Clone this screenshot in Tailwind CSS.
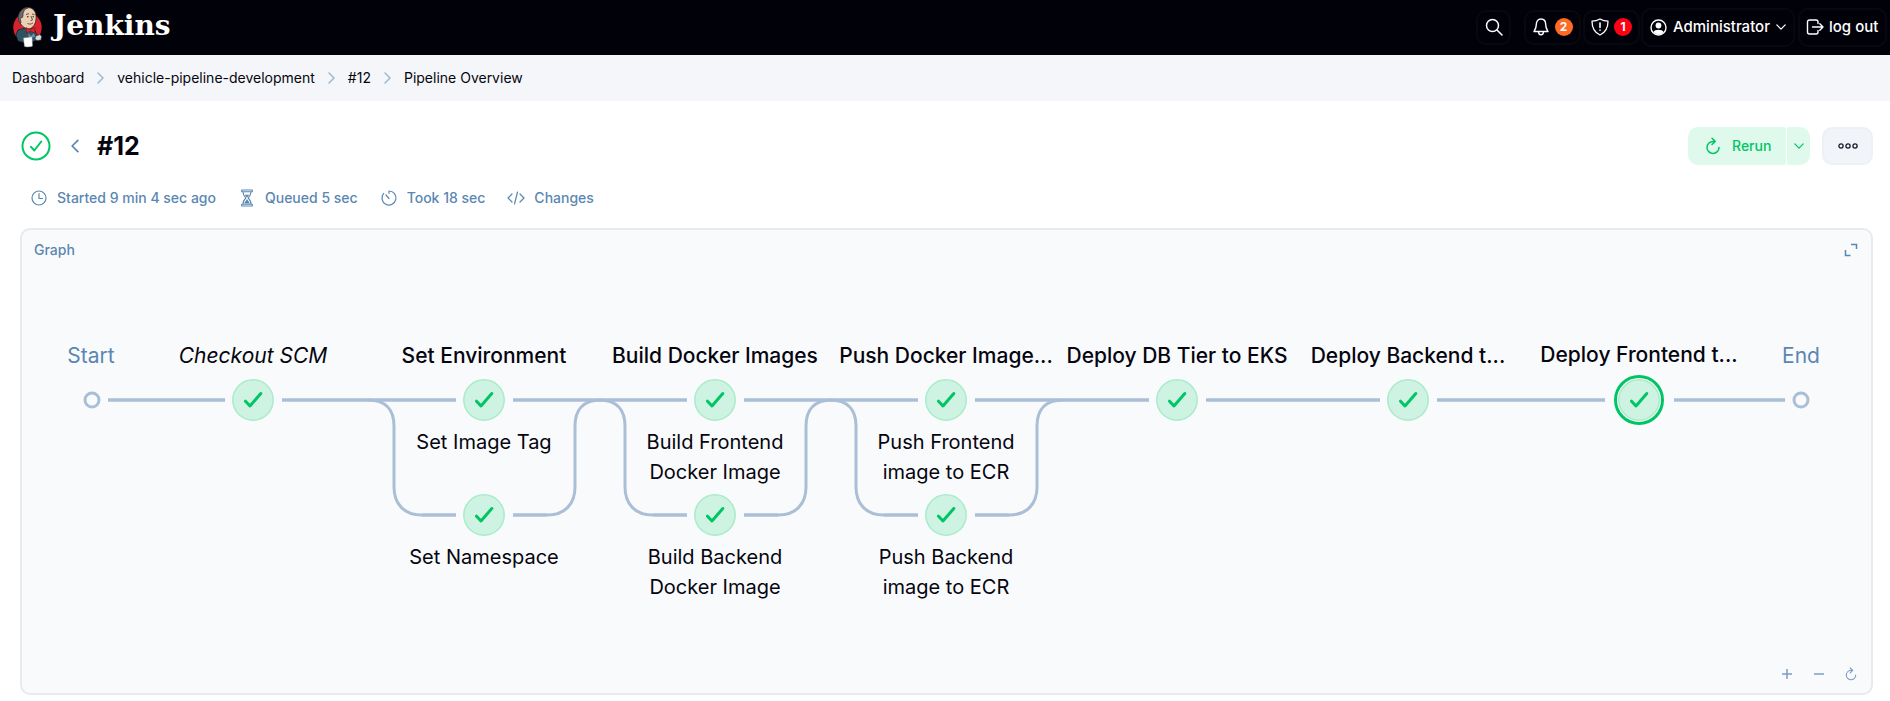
<!DOCTYPE html>
<html lang="en">
<head>
<meta charset="utf-8">
<meta name="viewport" content="width=device-width, initial-scale=1">
<title>vehicle-pipeline-development #12 - Pipeline Overview</title>
<script src="https://cdn.jsdelivr.net/npm/@tailwindcss/browser@4"></script>
</head>
<body class="flex min-h-screen flex-col bg-white font-['Inter',sans-serif] text-[14px] leading-5 text-[#05050f]">

<svg class="hidden" aria-hidden="true">
  <symbol id="node" viewBox="-22 -22 44 44">
    <circle r="20.2" fill="#cff3e2" stroke="#a9ecca" stroke-width="1.5"/>
    <path d="M-7.5 1.2-3 6 7.8-6.5" fill="none" stroke="#00c565" stroke-width="3" stroke-linecap="round" stroke-linejoin="round"/>
  </symbol>
  <symbol id="chevron" viewBox="0 0 7 12">
    <path d="M1 1l5 5-5 5" fill="none" stroke="currentColor" stroke-width="1.5" stroke-linecap="round" stroke-linejoin="round"/>
  </symbol>
  <symbol id="reload" viewBox="0 0 16 18">
    <path d="M9.5 4.4H8a6 6 0 1 0 6 6M7 1.3l3.2 3.1L7 7.5" fill="none" stroke="currentColor" stroke-width="1.5" stroke-linecap="round" stroke-linejoin="round"/>
  </symbol>
</svg>

<header class="flex h-[55px] shrink-0 items-center justify-between bg-[#01010a] pr-[3px] pb-[1px] pl-[12px] text-white">
  <a href="#" class="flex items-center gap-[10px]">
    <svg class="h-[42px] w-[31px]" viewBox="0 0 31 42" aria-hidden="true">
      <ellipse cx="15.500" cy="21.500" rx="14.200" ry="15" fill="#d8232f"/>
      <path d="M6 24l7-2 9 1 3 6 2 1-1 4-7 2-6 1-7-2-2-6z" fill="#2f5361" stroke="#0c1a20" stroke-width=".7"/>
      <path d="M8 17C5 12 7 4 13 2c7-2 12 3 11 11-.3 5-3 9-7 10-4 0-7-3-9-6z" fill="#eccfb2" stroke="#33201c" stroke-width=".8"/>
      <path d="M8 17c-3-4-2-11 3-14 2-1.300 4-1.400 5-1-4 1-5 4-5 8l-1 2-1-1c-1 2 0 4 0 6z" fill="#67696d" stroke="#292a2d" stroke-width=".6"/>
      <path d="M14 8.500l3-.8M20 8l2.500.7M19 10l1.500 4-2 .7M15.500 17.500c2 1 4 .6 5.500-.6" fill="none" stroke="#4b302a" stroke-width=".8"/>
      <circle cx="15.800" cy="10.800" r=".8" fill="#27222a"/><circle cx="21.200" cy="10.800" r=".7" fill="#27222a"/>
      <path d="M14 21.500l4 2 5-2-.3 5.500-4.700-2-3.500 2.400z" fill="#e0222c" stroke="#5b1517" stroke-width=".5"/>
      <path d="M16 27l3 3 3-3 1 4-6 1z" fill="#6f8fa0"/>
      <path d="M11.500 32l8.500-1 .5 9c-2 1-6 1.200-8 .5z" fill="#fff" stroke="#9da3a6" stroke-width=".4"/>
      <path d="M24 30l4-1.500 1.500 2-.5 3.500-4 .5-2-2z" fill="#d8dadd" stroke="#3b3b3e" stroke-width=".6"/>
    </svg>
    <span class="pb-[2px] font-['DejaVu_Serif',serif] text-[28px] leading-8 font-bold">Jenkins</span>
  </a>
  <nav class="flex items-center text-[15px] leading-6 font-medium" aria-label="User">
    <button class="mr-[13px] flex size-[35px] items-center justify-center rounded-[10px] border-2 border-white/3" aria-label="Search">
      <svg class="size-[18px]" viewBox="0 0 18 18" fill="none" stroke="currentColor" stroke-width="1.500" stroke-linecap="round"><circle cx="7.500" cy="7.500" r="6"/><path d="M12 12l5 5"/></svg>
    </button>
    <button class="mr-[2px] flex h-[35px] w-[57px] items-center justify-center gap-[6px] rounded-[10px] border-2 border-white/3" aria-label="Notifications, 2">
      <svg class="h-[18px] w-[16px]" viewBox="0 0 16 18" fill="none" stroke="currentColor" stroke-width="1.400" stroke-linejoin="round"><path d="M8 1C4.800 1 3.300 3.500 3.300 6.500 3.300 10 2 11.500 1 13.500h14c-1-2-2.300-3.500-2.300-7C12.700 3.500 11.200 1 8 1zM5.500 13.800c0 4 5 4 5 0"/></svg>
      <span class="flex size-[18px] items-center justify-center rounded-full bg-[#ff6a25] text-[12px] leading-4 font-bold">2</span>
    </button>
    <button class="mr-[1px] flex h-[35px] w-[57px] items-center justify-center gap-[5px] rounded-[10px] border-2 border-white/3" aria-label="Security warnings, 1">
      <svg class="size-[18px]" viewBox="0 0 18 18" fill="none" stroke="currentColor" stroke-width="1.300" stroke-linecap="round" stroke-linejoin="round"><path d="M9 1c-2.500 1.400-5.200 2.100-8 2.200C1 10 3.500 14.500 9 17c5.500-2.500 8-7 8-13.800C14.200 3.100 11.500 2.400 9 1z"/><path d="M9 5v4.500M9 12v.3" stroke-width="1.600"/></svg>
      <span class="flex size-[18px] items-center justify-center rounded-full bg-[#ff0015] text-[12px] leading-4 font-bold">1</span>
    </button>
    <button class="mr-[3px] flex h-[39px] w-[154px] items-center gap-[6px] rounded-[10px] border-2 border-white/3 pl-[7px]">
      <svg class="size-[17px]" viewBox="0 0 17 17"><circle cx="8.500" cy="8.500" r="7.500" fill="none" stroke="currentColor" stroke-width="1.400"/><circle cx="8.500" cy="6.500" r="2.900" fill="currentColor"/><path d="M3.500 13c1-3 9-3 10 0-2 3-8 3-10 0z" fill="currentColor"/></svg>
      <span class="whitespace-nowrap">Administrator</span>
      <svg class="ml-[2px] h-[10px] w-[6px] rotate-90"><use href="#chevron"/></svg>
    </button>
    <a href="#" class="flex h-[39px] w-[89px] items-center gap-[5px] rounded-[10px] border-2 border-white/3 pl-[6px]">
      <svg class="size-[18px]" viewBox="0 0 18 18" fill="none" stroke="currentColor" stroke-width="1.400" stroke-linecap="round" stroke-linejoin="round"><path d="M12 5.500V4a2 2 0 0 0-2-2H3.500a2 2 0 0 0-2 2v10a2 2 0 0 0 2 2H10a2 2 0 0 0 2-2v-1.500M6.500 9H17M13.800 5.800L17 9l-3.200 3.200"/></svg>
      <span class="whitespace-nowrap">log out</span>
    </a>
  </nav>
</header>

<nav class="flex h-[46px] shrink-0 items-center gap-[13px] bg-[#f5f6f9] pl-[12px]" aria-label="Breadcrumb">
  <a href="#">Dashboard</a>
  <svg class="h-[12px] w-[7px] text-[#9db8d3]"><use href="#chevron"/></svg>
  <a href="#">vehicle-pipeline-development</a>
  <svg class="h-[12px] w-[7px] text-[#9db8d3]"><use href="#chevron"/></svg>
  <a href="#">#12</a>
  <svg class="h-[12px] w-[7px] text-[#9db8d3]"><use href="#chevron"/></svg>
  <a href="#">Pipeline Overview</a>
</nav>

<main class="flex flex-1 flex-col px-[17px] pt-[26px] pb-[6px] pl-[20px]">
  <div class="flex h-[38px] items-center">
    <svg class="size-[32px]" viewBox="-16 -16 32 32" fill="none" stroke="#00c565" stroke-linecap="round" stroke-linejoin="round" role="img" aria-label="Success"><circle r="13.500" stroke-width="2"/><path d="M-5 .8-1.700 4.500 5.300-4.500" stroke-width="2"/></svg>
    <a href="#" class="ml-[19px] text-[#5a87b2]" aria-label="Previous build"><svg class="h-[14px] w-[8px] rotate-180"><use href="#chevron"/></svg></a>
    <h1 class="ml-[18px] text-[25px] leading-8 font-bold">#12</h1>
    <div class="ml-auto flex h-full gap-[1px] font-medium text-[#00c565]">
      <button class="flex w-[98px] items-center gap-[11px] rounded-l-[10px] rounded-r-[2px] bg-[#dff9ec] pl-[17px]">
        <svg class="h-[18px] w-[16px]"><use href="#reload"/></svg>Rerun
      </button>
      <button class="flex w-[23px] items-center justify-center rounded-l-[2px] rounded-r-[10px] bg-[#dff9ec]" aria-label="More rerun options">
        <svg class="h-[10px] w-[6px] rotate-90"><use href="#chevron"/></svg>
      </button>
    </div>
    <button class="ml-[12px] flex h-full w-[51px] items-center justify-center rounded-[10px] border-2 border-[#edf1f5] bg-[#f1f4f8]" aria-label="More actions">
      <svg class="h-[6px] w-[20px]" viewBox="0 0 20 6" fill="none" stroke="#1b1b28" stroke-width="1.300"><circle cx="3" cy="3" r="2.100"/><circle cx="10" cy="3" r="2.100"/><circle cx="17" cy="3" r="2.100"/></svg>
    </button>
  </div>

  <ul class="mt-[23px] flex h-[20px] items-center gap-[22px] pl-[10px] font-medium text-[#5a87b2]">
    <li class="flex items-center gap-[9px]">
      <svg class="size-[18px]" viewBox="0 0 18 18" fill="none" stroke="currentColor" stroke-width="1.200" stroke-linecap="round" stroke-linejoin="round"><circle cx="9" cy="9" r="7"/><path d="M9 4.500V9.500h3.500"/></svg>Started 9 min 4 sec ago
    </li>
    <li class="flex items-center gap-[9px]">
      <svg class="size-[18px]" viewBox="0 0 18 18" fill="none" stroke="currentColor" stroke-width="1.100" stroke-linejoin="round"><path d="M3.700 1h10.600v1.800H3.700zM3.700 15.200h10.600V17H3.700zM5 2.800c0 3 .8 4.300 2.800 6.200C5.800 10.900 5 12.200 5 15.200M13 2.800c0 3-.8 4.300-2.800 6.200 2 1.900 2.800 3.200 2.800 6.200"/><path d="M6.700 5.800h4.600L9 8.800zM6.300 14.500c.5-2 1.700-2.500 2.700-4.500 1 2 2.200 2.500 2.700 4.500z" fill="currentColor" stroke="none"/></svg>Queued 5 sec
    </li>
    <li class="flex items-center gap-[9px]">
      <svg class="size-[18px]" viewBox="0 0 18 18" fill="none" stroke="currentColor" stroke-width="1.200" stroke-linecap="round" stroke-linejoin="round"><path d="M9 4.300V2a7 7 0 1 1-5.300 2.400M6 6l3 3.500"/></svg>Took 18 sec
    </li>
    <li>
      <a href="#" class="flex items-center gap-[9px]">
        <svg class="size-[18px]" viewBox="0 0 18 18" fill="none" stroke="currentColor" stroke-width="1.200" stroke-linecap="round" stroke-linejoin="round"><path d="M5 5L1 9l4 4M13 5l4 4-4 4M10.500 3l-3 12"/></svg>Changes
      </a>
    </li>
  </ul>

  <section class="mt-[20px] flex flex-1 flex-col rounded-[10px] border-2 border-[#e6eaf1] bg-[#f9fafc]" aria-labelledby="graph-title">
    <div class="flex items-center justify-between pt-[10px] pr-[13px] pl-[12px] text-[#5a87b2]">
      <h2 id="graph-title" class="font-medium">Graph</h2>
      <button aria-label="Expand"><svg class="size-[14px]" viewBox="0 0 14 14" fill="none" stroke="currentColor" stroke-width="1.500"><path d="M7 1.500h5.500V6M1.500 7v5.500H6.500"/></svg></button>
    </div>

    <!-- Pipeline canvas: stages are 231px apart, parallel branches 115px below -->
    <div class="relative mx-auto mt-[70px] h-[280px] w-[1801px] text-[21px] leading-[30px]">
      <svg class="absolute top-0 left-0 h-[280px] w-[1800px]" viewBox="0 0 1800 280" fill="none" stroke="#aabfd6" aria-hidden="true">
        <path stroke-width="3.500" d="M62 70H179M236 70H410M467 70H641M698 70H872M929 70H1103M1160 70H1334M1391 70H1559M1628 70H1739M410 185H376M467 185H501M641 185H607M698 185H732M872 185H838M929 185H963"/>
        <g stroke-width="3">
          <path d="M322 70C340 70 348 80 348 96V157C348 174 358 185 376 185"/>
          <path d="M501 185C519 185 529 174 529 157V96C529 80 537 70 555 70"/>
          <path d="M553 70C571 70 579 80 579 96V157C579 174 589 185 607 185"/>
          <path d="M732 185C750 185 760 174 760 157V96C760 80 768 70 786 70"/>
          <path d="M784 70C802 70 810 80 810 96V157C810 174 820 185 838 185"/>
          <path d="M963 185C981 185 991 174 991 157V96C991 80 999 70 1017 70"/>
          <circle cx="46" cy="70" r="7"/>
          <circle cx="1755" cy="70" r="7"/>
        </g>
      </svg>

      <span class="absolute top-[11px] left-[45px] -translate-x-1/2 text-[#5a87b2]">Start</span>
      <span class="absolute top-[11px] left-[1755px] -translate-x-1/2 text-[#5a87b2]">End</span>

      <div class="absolute top-[11px] left-[207px] w-[226px] -translate-x-1/2 text-center font-[450] italic">Checkout SCM</div>
      <div class="absolute top-[11px] left-[438px] w-[226px] -translate-x-1/2 text-center font-[450]">Set Environment</div>
      <div class="absolute top-[11px] left-[669px] w-[226px] -translate-x-1/2 text-center font-[450]">Build Docker Images</div>
      <div class="absolute top-[11px] left-[900px] w-[226px] -translate-x-1/2 text-center font-[450]">Push Docker Image...</div>
      <div class="absolute top-[11px] left-[1131px] w-[226px] -translate-x-1/2 text-center font-[450]">Deploy DB Tier to EKS</div>
      <div class="absolute top-[11px] left-[1362px] w-[226px] -translate-x-1/2 text-center font-[450]">Deploy Backend t...</div>
      <div class="absolute top-[10px] left-[1593px] w-[226px] -translate-x-1/2 text-center font-[450]">Deploy Frontend t...</div>

      <a href="#" class="absolute top-[48px] left-[185px] size-[44px]" aria-label="Checkout SCM"><svg class="size-[44px]"><use href="#node"/></svg></a>
      <a href="#" class="absolute top-[48px] left-[416px] size-[44px]" aria-label="Set Image Tag"><svg class="size-[44px]"><use href="#node"/></svg></a>
      <a href="#" class="absolute top-[48px] left-[647px] size-[44px]" aria-label="Build Frontend Docker Image"><svg class="size-[44px]"><use href="#node"/></svg></a>
      <a href="#" class="absolute top-[48px] left-[878px] size-[44px]" aria-label="Push Frontend image to ECR"><svg class="size-[44px]"><use href="#node"/></svg></a>
      <a href="#" class="absolute top-[48px] left-[1109px] size-[44px]" aria-label="Deploy DB Tier to EKS"><svg class="size-[44px]"><use href="#node"/></svg></a>
      <a href="#" class="absolute top-[48px] left-[1340px] size-[44px]" aria-label="Deploy Backend"><svg class="size-[44px]"><use href="#node"/></svg></a>
      <a href="#" class="absolute top-[45px] left-[1568px] flex size-[50px] items-center justify-center rounded-full border-3 border-[#00c565]" aria-label="Deploy Frontend" aria-current="true"><svg class="size-[44px] shrink-0"><use href="#node"/></svg></a>

      <a href="#" class="absolute top-[163px] left-[416px] size-[44px]" aria-label="Set Namespace"><svg class="size-[44px]"><use href="#node"/></svg></a>
      <a href="#" class="absolute top-[163px] left-[647px] size-[44px]" aria-label="Build Backend Docker Image"><svg class="size-[44px]"><use href="#node"/></svg></a>
      <a href="#" class="absolute top-[163px] left-[878px] size-[44px]" aria-label="Push Backend image to ECR"><svg class="size-[44px]"><use href="#node"/></svg></a>

      <div class="absolute top-[97px] left-[438px] w-[160px] -translate-x-1/2 text-center text-[20px]">Set Image Tag</div>
      <div class="absolute top-[97px] left-[669px] w-[160px] -translate-x-1/2 text-center text-[20px]">Build Frontend<br>Docker Image</div>
      <div class="absolute top-[97px] left-[900px] w-[160px] -translate-x-1/2 text-center text-[20px]">Push Frontend<br>image to ECR</div>
      <div class="absolute top-[212px] left-[438px] w-[160px] -translate-x-1/2 text-center text-[20px]">Set Namespace</div>
      <div class="absolute top-[212px] left-[669px] w-[160px] -translate-x-1/2 text-center text-[20px]">Build Backend<br>Docker Image</div>
      <div class="absolute top-[212px] left-[900px] w-[160px] -translate-x-1/2 text-center text-[20px]">Push Backend<br>image to ECR</div>
    </div>

    <div class="mt-auto flex items-center justify-end gap-[18px] pr-[13px] pb-[12px] text-[#7c9fc2]">
      <button aria-label="Zoom in"><svg class="size-[14px]" viewBox="0 0 14 14" stroke="currentColor" stroke-width="1.500"><path d="M7 2v10M2 7h10"/></svg></button>
      <button aria-label="Zoom out"><svg class="size-[14px]" viewBox="0 0 14 14" stroke="currentColor" stroke-width="1.500"><path d="M2 7h10"/></svg></button>
      <button aria-label="Reset zoom"><svg class="size-[14px]"><use href="#reload"/></svg></button>
    </div>
  </section>
</main>
</body>
</html>
